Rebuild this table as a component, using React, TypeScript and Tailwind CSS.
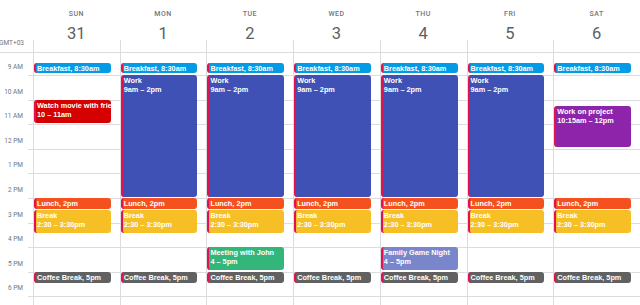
import React from "react";

const H = 24.6;
const OFF = 22;

type Ev = {
  title: string;
  time: string;
  start: number;
  end: number;
  color: string;
  single?: boolean;
};

const breakfast: Ev = { title: "Breakfast", time: "8:30am", start: 8.5, end: 9, color: "#039be5", single: true };
const work: Ev = { title: "Work", time: "9am – 2pm", start: 9, end: 14, color: "#3f51b5" };
const lunch: Ev = { title: "Lunch", time: "2pm", start: 14, end: 14.5, color: "#f4511e", single: true };
const brk: Ev = { title: "Break", time: "2:30 – 3:30pm", start: 14.5, end: 15.5, color: "#f6bf26" };
const coffee: Ev = { title: "Coffee Break", time: "5pm", start: 17, end: 17.5, color: "#616161", single: true };
const movie: Ev = { title: "Watch movie with friends", time: "10 – 11am", start: 10, end: 11, color: "#d50000" };
const meeting: Ev = { title: "Meeting with John", time: "4 – 5pm", start: 16, end: 17, color: "#33b679" };
const family: Ev = { title: "Family Game Night", time: "4 – 5pm", start: 16, end: 17, color: "#7986cb" };
const project: Ev = { title: "Work on project", time: "10:15am – 12pm", start: 10.25, end: 12, color: "#8e24aa" };

const days: { name: string; num: string; events: Ev[] }[] = [
  { name: "SUN", num: "31", events: [breakfast, movie, lunch, brk, coffee] },
  { name: "MON", num: "1", events: [breakfast, work, lunch, brk, coffee] },
  { name: "TUE", num: "2", events: [breakfast, work, lunch, brk, meeting, coffee] },
  { name: "WED", num: "3", events: [breakfast, work, lunch, brk, coffee] },
  { name: "THU", num: "4", events: [breakfast, work, lunch, brk, family, coffee] },
  { name: "FRI", num: "5", events: [breakfast, work, lunch, brk, coffee] },
  { name: "SAT", num: "6", events: [breakfast, project, lunch, brk, coffee] },
];

const hours = ["9 AM", "10 AM", "11 AM", "12 PM", "1 PM", "2 PM", "3 PM", "4 PM", "5 PM", "6 PM"];

function Event({ ev }: { ev: Ev }) {
  const top = OFF + (ev.start - 9) * H;
  const height = (ev.end - ev.start) * H - 1.5;
  return (
    <div
      className="absolute left-0 right-[9px] rounded-[3px] border-l-2 border-l-[#e0134f] overflow-hidden text-white text-[7.3px] leading-[9px] pl-[1px] pt-[1px] font-bold"
      style={{ top, height, backgroundColor: ev.color, fontFamily: "'Liberation Sans', Arial, sans-serif" }}
    >
      {ev.single ? (
        <div className="whitespace-nowrap">
          {ev.title}, {ev.time}
        </div>
      ) : (
        <>
          <div className="whitespace-nowrap">{ev.title}</div>
          <div className="whitespace-nowrap">{ev.time}</div>
        </>
      )}
    </div>
  );
}

export default function App() {
  return (
    <div
      className="w-[640px] h-[305px] overflow-hidden bg-white"
      style={{ fontFamily: "Roboto, 'Noto Sans', sans-serif" }}
    >
      {/* Header */}
      <div className="grid grid-cols-[33px_repeat(7,1fr)] h-[53px] border-b border-[#dadce0]">
        <div className="flex flex-col justify-end items-end pr-[9px] pb-[5px]">
          <div className="text-[6.5px] leading-[8px] text-[#70757a] whitespace-nowrap">GMT+03</div>
        </div>
        {days.map((d) => (
          <div key={d.name} className="flex flex-col">
            <div className="h-[40px] flex flex-col items-center pt-[10px]">
              <div className="text-[7px] leading-[8px] tracking-[0.5px] font-medium text-[#70757a]">{d.name}</div>
              <div className="mt-[6px] text-[16.5px] leading-[20px] text-[#5a5f64]">{d.num}</div>
            </div>
            <div className="flex-1 border-l border-[#dadce0]" />
          </div>
        ))}
      </div>

      {/* Body */}
      <div className="grid grid-cols-[33px_repeat(7,1fr)] h-[252px] overflow-hidden">
        <div className="flex flex-col">
          <div className="h-[22px] shrink-0" />
          {hours.map((h) => (
            <div key={h} className="h-[24.6px] shrink-0 flex">
              <div className="flex-1 flex justify-end pr-[5px]">
                <div className="text-[6.5px] leading-[8px] text-[#70757a] whitespace-nowrap -translate-y-1/2">{h}</div>
              </div>
              <div className="w-[5px] border-t border-[#dadce0]" />
            </div>
          ))}
        </div>
        {days.map((d) => (
          <div key={d.name} className="relative border-l border-[#dadce0] flex flex-col">
            <div className="h-[22px] shrink-0" />
            {hours.map((h) => (
              <div key={h} className="h-[24.6px] shrink-0 border-t border-[#dadce0]" />
            ))}
            {d.events.map((ev, i) => (
              <Event key={i} ev={ev} />
            ))}
          </div>
        ))}
      </div>
    </div>
  );
}
